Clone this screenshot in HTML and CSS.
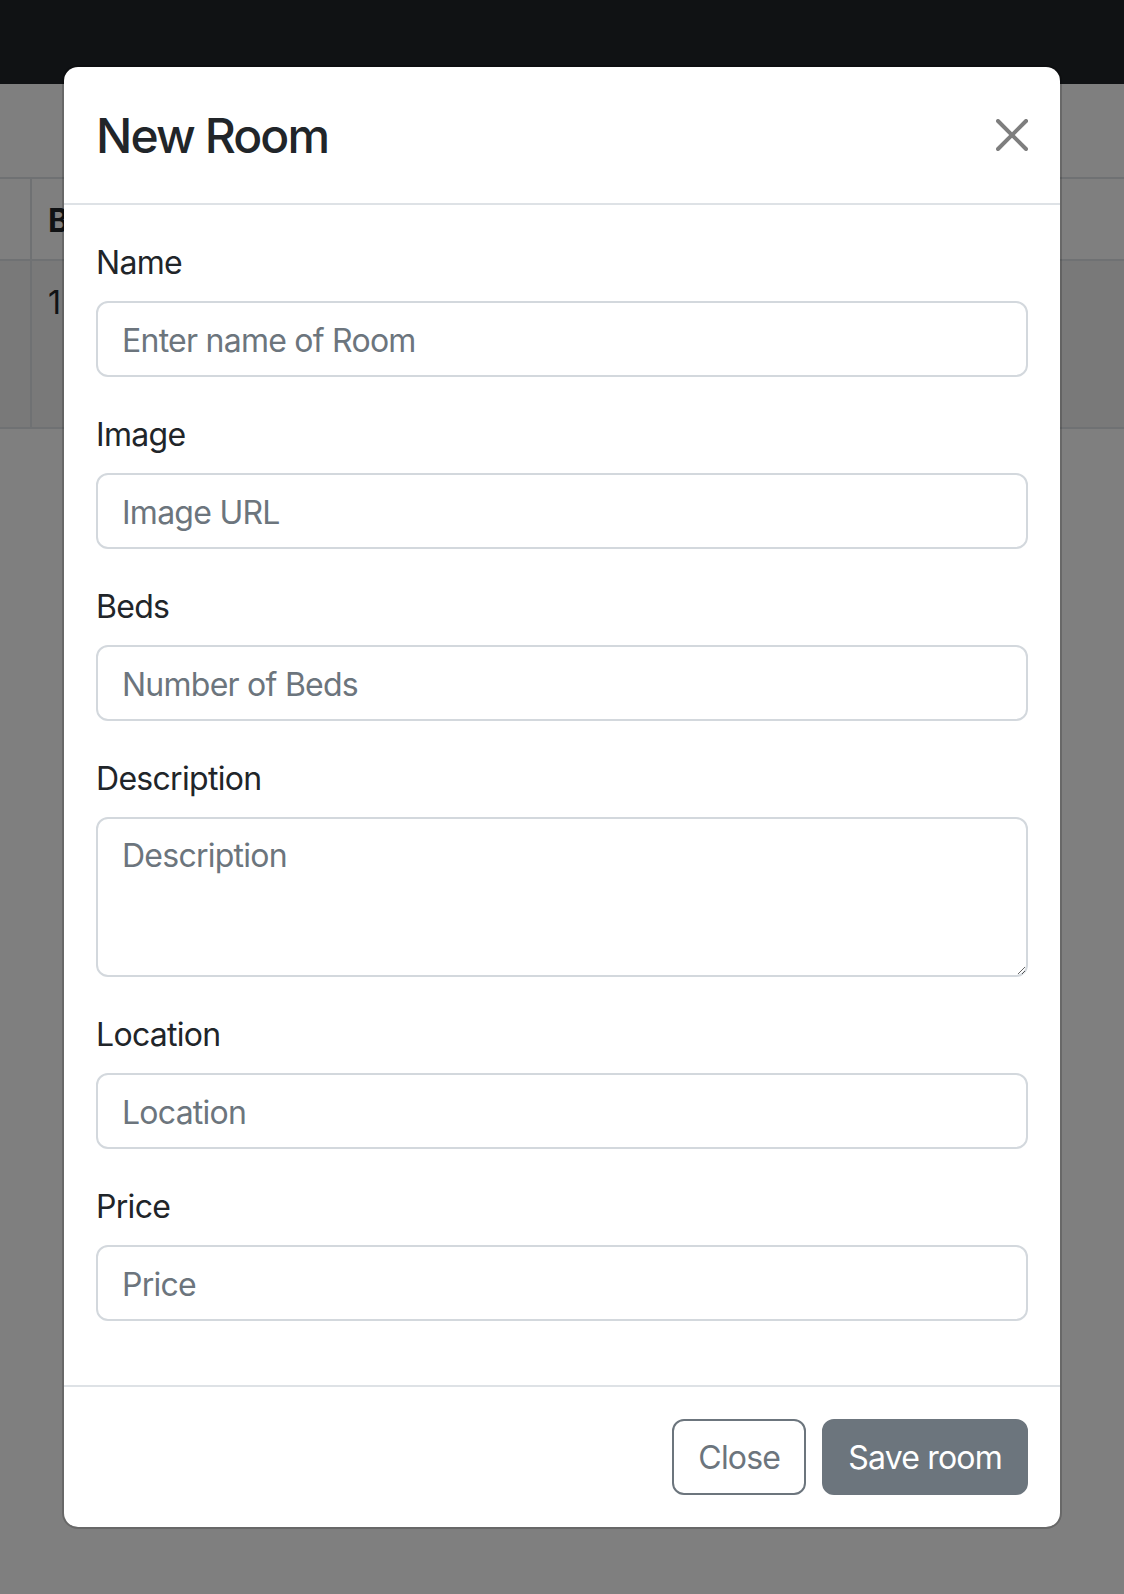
FILE: index.html
```html
<!DOCTYPE html>
<html lang="en">
<head>
<meta charset="utf-8">
<title>New Room</title>
<link rel="stylesheet" href="styles.css">
</head>
<body>
<nav class="navbar"></nav>
<main class="page">
  <table class="rooms">
    <thead>
      <tr><th class="narrow"></th><th>Beds</th></tr>
    </thead>
    <tbody>
      <tr class="striped"><td class="narrow"></td><td class="tall">1</td></tr>
    </tbody>
  </table>
</main>
<div class="backdrop"></div>
<div class="modal">
  <div class="modal-dialog">
    <div class="modal-content">
      <div class="modal-header">
        <h3 class="modal-title">New Room</h3>
        <button class="btn-close" type="button" aria-label="Close">
          <svg viewBox="0 0 16 16" width="32" height="32"><path fill="#000" d="M.293.293a1 1 0 0 1 1.414 0L8 6.586 14.293.293a1 1 0 1 1 1.414 1.414L9.414 8l6.293 6.293a1 1 0 0 1-1.414 1.414L8 9.414l-6.293 6.293a1 1 0 0 1-1.414-1.414L6.586 8 .293 1.707a1 1 0 0 1 0-1.414z"/></svg>
        </button>
      </div>
      <form class="modal-body">
        <div class="field">
          <label class="form-label">Name</label>
          <input class="form-control" type="text" placeholder="Enter name of Room">
        </div>
        <div class="field">
          <label class="form-label">Image</label>
          <input class="form-control" type="text" placeholder="Image URL">
        </div>
        <div class="field">
          <label class="form-label">Beds</label>
          <input class="form-control" type="text" placeholder="Number of Beds">
        </div>
        <div class="field">
          <label class="form-label">Description</label>
          <textarea class="form-control textarea" placeholder="Description"></textarea>
        </div>
        <div class="field">
          <label class="form-label">Location</label>
          <input class="form-control" type="text" placeholder="Location">
        </div>
        <div class="field">
          <label class="form-label">Price</label>
          <input class="form-control" type="text" placeholder="Price">
        </div>
      </form>
      <div class="modal-footer">
        <button class="btn btn-outline" type="button">Close</button>
        <button class="btn btn-solid" type="button">Save room</button>
      </div>
    </div>
  </div>
</div>
</body>
</html>
```
FILE: styles.css
```css
* { box-sizing: border-box; }
html, body { margin: 0; padding: 0; }
body {
  width: 1124px;
  height: 1594px;
  overflow: hidden;
  background: #fff;
  color: #212529;
  font-family: "Inter", "Liberation Sans", sans-serif;
  font-size: 32px;
  line-height: 1.5;
  position: relative;
}
.navbar {
  height: 84px;
  background: #212529;
}
.page {
  padding-top: 93px;
}
.rooms {
  width: 100%;
  border-collapse: collapse;
}
.rooms th, .rooms td {
  border-top: 2px solid #dee2e6;
  border-bottom: 2px solid #dee2e6;
  padding: 18px 16px 14px;
  text-align: left;
  vertical-align: top;
}
.rooms .narrow {
  width: 31px;
  padding: 0;
  border-right: 2px solid #dee2e6;
}
.rooms th { font-weight: 700; height: 82px; }
.rooms .striped td { background: rgba(0,0,0,0.05); }
.rooms .tall { height: 168px; }
.backdrop {
  position: absolute;
  inset: 0;
  background: rgba(0,0,0,0.5);
}
.modal {
  position: absolute;
  inset: 0;
}
.modal-dialog {
  width: 1000px;
  margin: 65px auto 0;
}
.modal-content {
  background: #fff;
  border: 2px solid rgba(0,0,0,0.175);
  border-radius: 16px;
  background-clip: padding-box;
  display: flex;
  flex-direction: column;
}
.modal-header {
  display: flex;
  align-items: center;
  justify-content: space-between;
  padding: 32px 32px;
  border-bottom: 2px solid #dee2e6;
}
.modal-title {
  margin: 0;
  padding-top: 2px;
  font-size: 48px;
  line-height: 70px;
  font-weight: 500;
  letter-spacing: -1.9px;
}
.btn-close {
  border: 0;
  background: none;
  padding: 0;
  width: 32px;
  height: 32px;
  opacity: 0.5;
  display: flex;
}
.modal-body {
  padding: 32px;
  margin: 0;
  display: flex;
  flex-direction: column;
}
.field {
  margin-bottom: 32px;
  display: flex;
  flex-direction: column;
}
.form-label {
  margin-bottom: 14px;
  padding-top: 2px;
  line-height: 48px;
  letter-spacing: -0.7px;
}
.form-control {
  font: inherit;
  letter-spacing: -0.75px;
  width: 100%;
  height: 76px;
  padding: 13px 24px 11px;
  border: 2px solid #d3d8dd;
  border-radius: 12px;
  color: #212529;
  background: #fff;
  line-height: 48px;
}
.form-control::placeholder { color: #6c757d; opacity: 1; }
.textarea {
  height: 160px;
  resize: vertical;
  display: block;
}
.modal-footer {
  display: flex;
  justify-content: flex-end;
  align-items: center;
  padding: 24px;
  border-top: 2px solid #dee2e6;
}
.btn {
  font: inherit;
  letter-spacing: -0.8px;
  margin: 8px;
  height: 76px;
  padding: 13px 24px 11px;
  border-radius: 12px;
  border: 2px solid #6c757d;
  line-height: 48px;
}
.btn-outline { background: #fff; color: #6c757d; }
.btn-solid { background: #6c757d; color: #fff; }
```
